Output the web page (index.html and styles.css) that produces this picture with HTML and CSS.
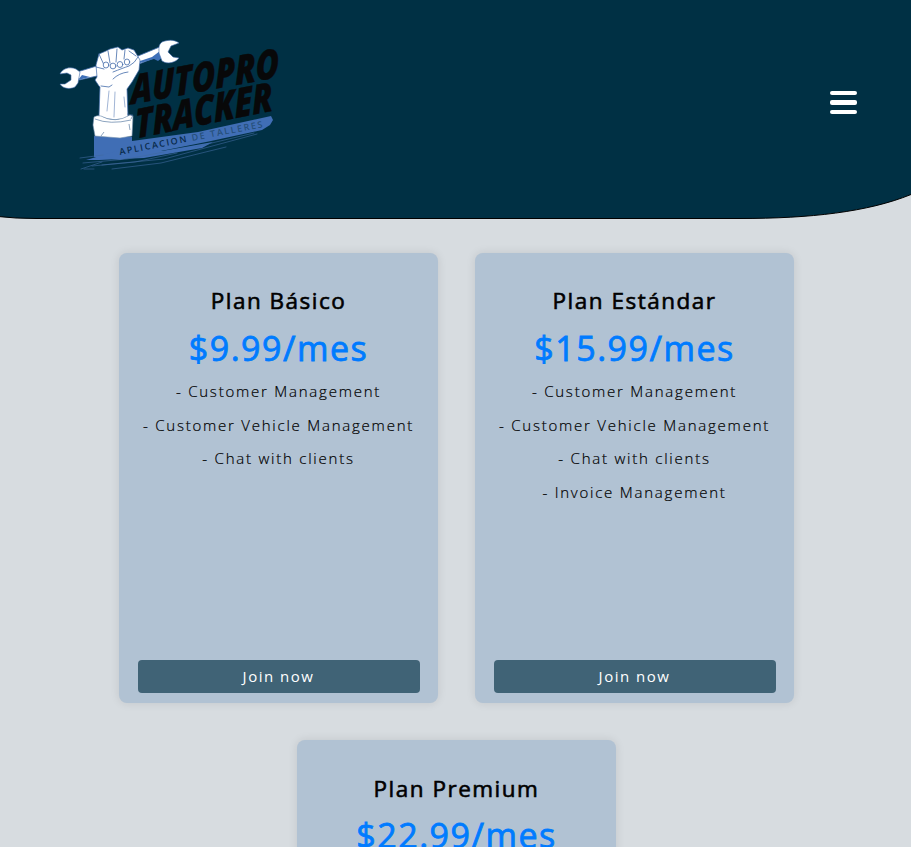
FILE: index.html
```html
<!DOCTYPE html>
<html lang="es">
<head>
<meta charset="utf-8">
<title>AutoPro Tracker</title>
<link rel="stylesheet" href="styles.css">
</head>
<body>
<header class="header">
  <svg class="header-shape" viewBox="0 0 911 220" aria-hidden="true">
    <path d="M-2-2H913V194L911 194.500C868 212 810 218.500 740 218.500H36Q15 218.500-2 216.500Z" fill="#003044" stroke="#000"/>
  </svg>
  <svg class="logo" viewBox="50 30 240 150" role="img" aria-label="AutoPro Tracker">
    <g fill="#406eb5">
      <path d="M94 136L132 137V141L198 132L271 116L273 120L270 125L262 130L211 141L151 153L120 160L94 157Z"/>
      <path d="M86 160L117 151L162 151L213 142L202 148L144 158L99 160Z"/>
    </g>
    <g fill="none" stroke="#40699f" stroke-width=".6" stroke-linecap="round">
      <path d="M80 158L103 155M83 163L127 159L164 152M92 166L135 162L177 153M81 169L102 162M102 165L164 159L257 134M112 169L161 163L226 147M84 169L94 169M195 147L254 133"/>
    </g>
    <path d="M77 72L100 65L138 56L162 46L164 54L139 64L106 74L79 80Z" fill="#fff" stroke="#416cab" stroke-width=".8"/>
    <path d="M78 80L82 75L90 77ZM140 61L152 57L160 51L163 57L158 61L154 59L140 63Z" fill="#3e70b8"/>
    <path d="M60 74C62 69 69 66 76 69L80 72L78 83L75 87C69 90 62 88 60 84L65 84L71 80L71 75L67 73Z" fill="#fff" stroke="#416cab" stroke-width=".6"/>
    <path d="M179 43C174 39 167 40 162 42C158 45 159 49 159 53L162 61C168 65 176 62 179 58L173 57L168 52L171 46Z" fill="#fff" stroke="#416cab" stroke-width=".6"/>
    <path d="M100 87L99 116Q115 123 128 117L127 89L132 82L139 70L140 60L134 50L128 48L122 50L118 47L110 49L106 51L99 54L96 65L97 77L95 80L99 86Z" fill="#fff" stroke="#416cab" stroke-width=".7"/>
    <g fill="none" stroke="#426baa" stroke-width=".8" stroke-linecap="round">
      <path d="M99 54L104 65M108 51L110 63M117 49L116 62M125 50L124 59M129 51L136 56M96 67L104 69M113 72Q123 68 129 66Q135 63 138 57M128 72Q119 73 113 79M101 86L109 87L112 85"/>
      <path d="M109 91L107 111M115 92L114 117M124 97L125 107" stroke-width=".5"/>
      <g fill="#fff"><ellipse cx="106" cy="65" rx="2.800" ry="3"/><ellipse cx="113" cy="66" rx="2.900" ry="2.900"/><ellipse cx="120" cy="64.500" rx="2.800" ry="3"/><ellipse cx="127" cy="62" rx="2.700" ry="3"/></g>
    </g>
    <path d="M94 117Q97 115 101 116Q115 124 130 115L133 116L132 136L120 138L95 136L93 125Z" fill="#fff" stroke="#7592b0" stroke-width=".6"/>
    <path d="M95 119Q110 125 131 120M127 114L133 115L131 119M101 136L104 132M129 124L130 130" fill="none" stroke="#406794" stroke-width=".6"/>
    <g class="logo-name">
      <text transform="translate(131 104.500) rotate(-10.500) skewX(-9)" textLength="151" lengthAdjust="spacingAndGlyphs">AUTOPRO</text>
      <text transform="translate(136 138.500) rotate(-11.500) skewX(-9)" textLength="140" lengthAdjust="spacingAndGlyphs">TRACKER</text>
    </g>
    <text class="logo-tagline" transform="translate(120 155) rotate(-11)" textLength="147">APLICACION <tspan fill="#26507b">DE TALLERES</tspan></text>
  </svg>
  <button class="menu" aria-label="Menu"><span></span><span></span><span></span></button>
</header>
<main class="plans">
  <section class="card">
    <h2>Plan Básico</h2>
    <p class="price">$9.99/mes</p>
    <ul><li>- Customer Management</li><li>- Customer Vehicle Management</li><li>- Chat with clients</li></ul>
    <button class="join">Join now</button>
  </section>
  <section class="card">
    <h2>Plan Estándar</h2>
    <p class="price">$15.99/mes</p>
    <ul><li>- Customer Management</li><li>- Customer Vehicle Management</li><li>- Chat with clients</li><li>- Invoice Management</li></ul>
    <button class="join">Join now</button>
  </section>
  <section class="card">
    <h2>Plan Premium</h2>
    <p class="price">$22.99/mes</p>
  </section>
</main>
</body>
</html>
```
FILE: styles.css
```css
* { box-sizing: border-box; }
html { height: 100%; overflow: hidden; }
body {
  height: 100%;
  margin: 0;
  overflow: hidden;
  background: #d7dce0;
  color: #000;
  font-family: "Open Sans", sans-serif;
  letter-spacing: 1.5px;
}
.header {
  position: relative;
  display: flex;
  justify-content: space-between;
  align-items: flex-start;
  height: 219px;
  padding: 30px 54px 0 50px;
}
.header-shape {
  position: absolute;
  inset: 0;
  width: 100%;
  height: 220px;
}
.logo { position: relative; width: 240px; height: 150px; overflow: visible; }
.logo-name {
  font: italic 800 40px "Open Sans", sans-serif;
  letter-spacing: 0;
  fill: #080809;
  stroke: #080809;
  stroke-width: .4px;
  stroke-linejoin: round;
}
.logo-tagline {
  font: 600 9px "Open Sans", sans-serif;
  fill: #092b4c;
}
.menu {
  position: relative;
  display: flex;
  flex-direction: column;
  gap: 5px;
  width: 27px;
  margin-top: 61px;
  padding: 0;
  border: 0;
  background: none;
}
.menu span { width: 27px; height: 4.300px; border-radius: 2px; background: #fff; }
.plans {
  display: flex;
  flex-wrap: wrap;
  justify-content: center;
  gap: 37.800px 37px;
  padding: 33.600px 0 0 2px;
}
.card {
  display: flex;
  flex-direction: column;
  width: 319px;
  height: 450px;
  padding: 32px 18.500px 10px;
  border-radius: 8px;
  background: #b1c2d3;
  box-shadow: 0 0 10px rgba(0, 0, 0, .1);
  text-align: center;
}
.card h2 {
  margin: .5px 0 0;
  font-size: 22.500px;
  font-weight: 400;
  line-height: 32px;
  -webkit-text-stroke: .6px currentColor;
}
.price {
  margin: 6.500px 0 0;
  color: #007bff;
  font-size: 34px;
  font-weight: 400;
  line-height: 48px;
  -webkit-text-stroke: .8px currentColor;
}
.card ul { margin: 3.400px 0 0; padding: 0; list-style: none; }
.card li {
  height: 33.600px;
  font-size: 15px;
  font-weight: 300;
  letter-spacing: 1.770px;
  line-height: 33.600px;
  white-space: nowrap;
  -webkit-text-stroke: .2px currentColor;
}
.join {
  height: 33px;
  margin-top: auto;
  padding: 0 0 1px;
  border: 0;
  border-radius: 4px;
  background: #406376;
  color: #fff;
  font: 500 15px "Open Sans", sans-serif;
  letter-spacing: 1.5px;
}
```
